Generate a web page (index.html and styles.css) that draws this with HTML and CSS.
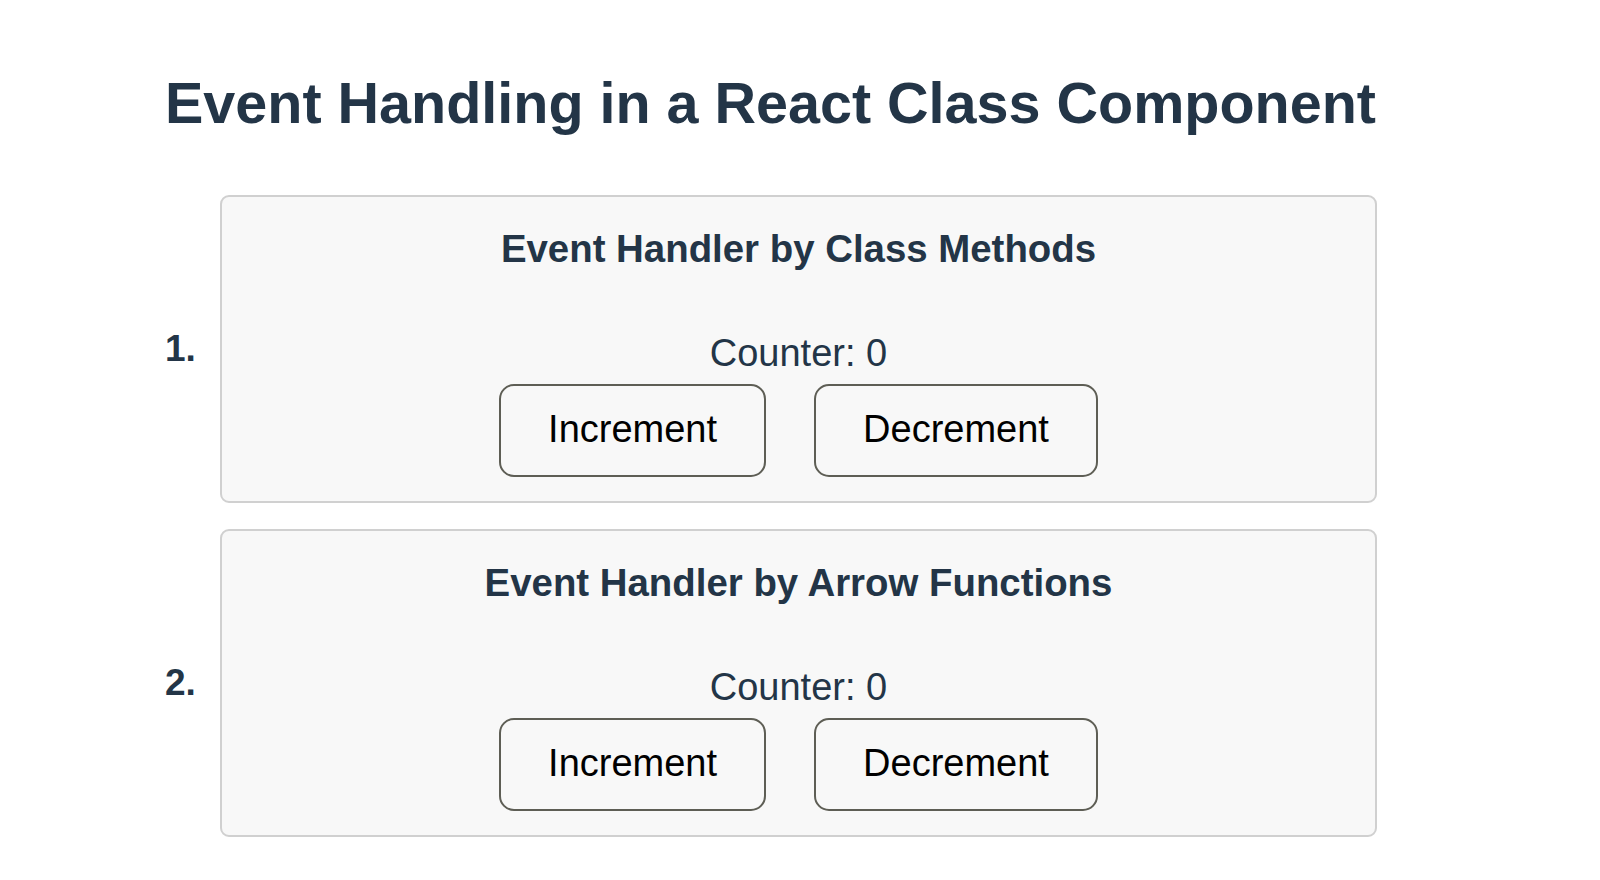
FILE: index.html
```html
<!DOCTYPE html>
<html lang="en">
<head>
<meta charset="utf-8">
<title>Event Handling in a React Class Component</title>
<link rel="stylesheet" href="styles.css">
</head>
<body>
<div class="page">
  <h1 class="title">Event Handling in a React Class Component</h1>
  <ol class="demos">
    <li class="demo">
      <span class="num">1.</span>
      <section class="card">
        <h2 class="card-title">Event Handler by Class Methods</h2>
        <p class="counter">Counter: 0</p>
        <div class="actions">
          <button class="btn" type="button">Increment</button>
          <button class="btn" type="button">Decrement</button>
        </div>
      </section>
    </li>
    <li class="demo">
      <span class="num">2.</span>
      <section class="card">
        <h2 class="card-title">Event Handler by Arrow Functions</h2>
        <p class="counter">Counter: 0</p>
        <div class="actions">
          <button class="btn" type="button">Increment</button>
          <button class="btn" type="button">Decrement</button>
        </div>
      </section>
    </li>
  </ol>
</div>
</body>
</html>
```
FILE: styles.css
```css
html, body {
  margin: 0;
  padding: 0;
  background: #ffffff;
}

body {
  font-family: "Liberation Sans", Arial, sans-serif;
  color: #233547;
}

.page {
  width: 1212px;
  padding: 70px 0 0 165px;
}

.title {
  margin: 0 0 59px 0;
  font-size: 57.5px;
  line-height: 66px;
  font-weight: 700;
  color: #233547;
  white-space: nowrap;
}

.demos {
  list-style: none;
  margin: 0;
  padding: 0;
  display: flex;
  flex-direction: column;
  gap: 26px;
}

.demo {
  display: flex;
  align-items: center;
}

.num {
  flex: 0 0 55px;
  font-size: 37px;
  font-weight: 700;
  line-height: 42px;
  color: #233547;
}

.card {
  flex: 1;
  box-sizing: border-box;
  height: 308px;
  border: 2px solid #d0d0d0;
  border-radius: 9px;
  background: #f8f8f8;
  padding: 30px 0 24px;
  display: flex;
  flex-direction: column;
  align-items: center;
}

.card-title {
  margin: 0 0 60px;
  font-size: 38.4px;
  line-height: 44px;
  font-weight: 700;
  color: #233547;
}

.counter {
  margin: 0 0 9px;
  font-size: 38px;
  line-height: 44px;
  color: #233547;
}

.actions {
  display: flex;
  gap: 48px;
}

.btn {
  font-family: "Liberation Sans", Arial, sans-serif;
  font-size: 38px;
  line-height: 41px;
  color: #000000;
  background: transparent;
  border: 2px solid #5e5e55;
  border-radius: 15px;
  padding: 23px 47px 25px;
  margin: 0;
  cursor: pointer;
}
```
